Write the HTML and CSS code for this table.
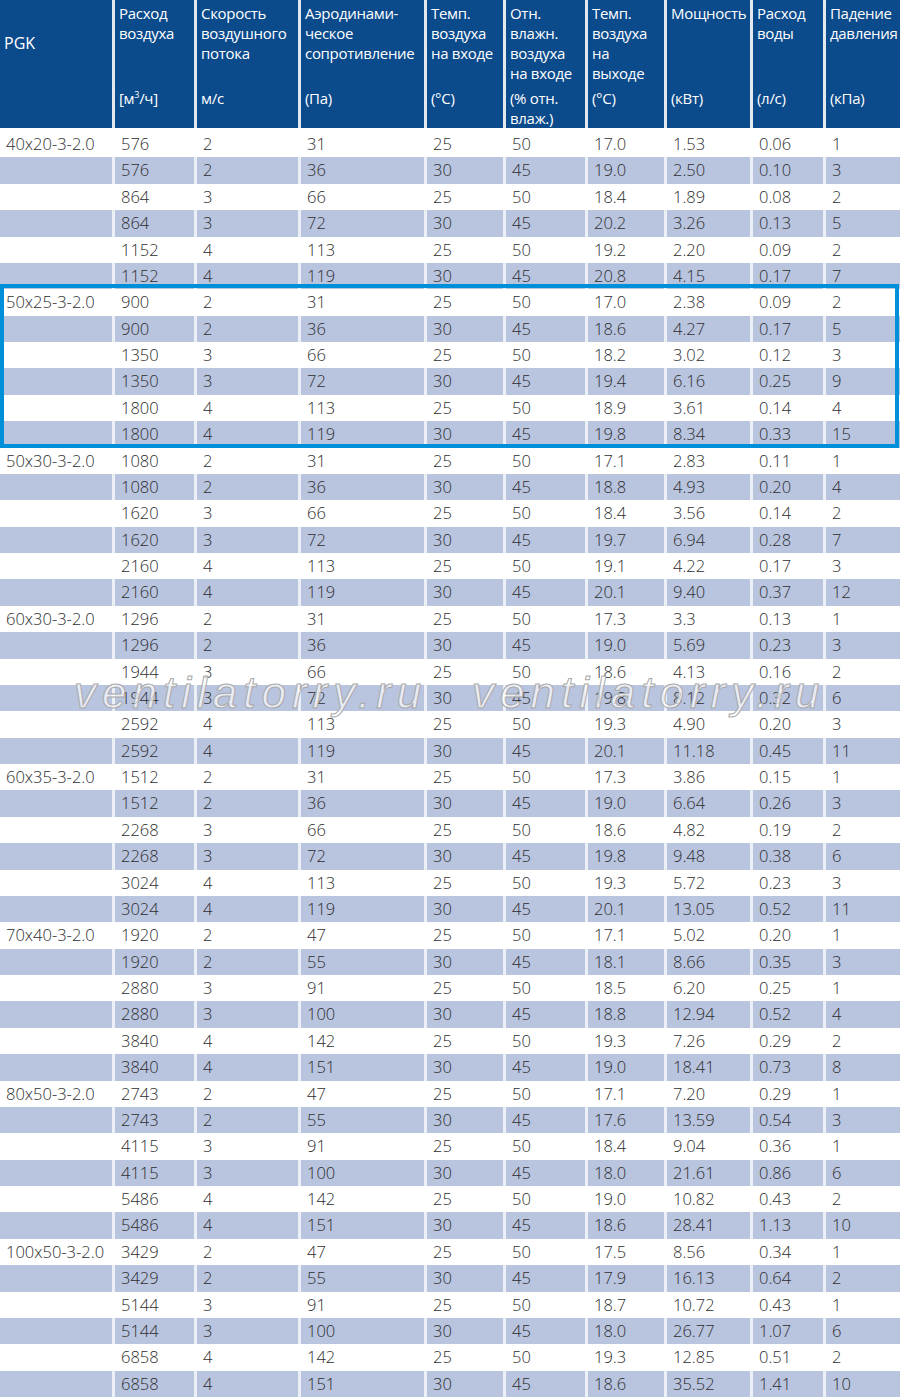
FILE: index.html
```html
<!DOCTYPE html>
<html lang="ru">
<head>
<meta charset="utf-8">
<title>PGK</title>
<link rel="stylesheet" href="styles.css">
</head>
<body>
<div class="sheet">
  <div class="head">
    <div class="h pgk">PGK</div>
    <div class="h"><div class="t">Расход<br>воздуха</div><div class="u">[м<sup>3</sup>/ч]</div></div>
    <div class="h"><div class="t">Скорость<br>воздушного<br>потока</div><div class="u">м/с</div></div>
    <div class="h"><div class="t">Аэродинами-<br>ческое<br>сопротивление</div><div class="u">(Па)</div></div>
    <div class="h"><div class="t">Темп.<br>воздуха<br>на входе</div><div class="u">(°C)</div></div>
    <div class="h"><div class="t">Отн.<br>влажн.<br>воздуха<br>на входе</div><div class="u">(% отн.<br>влаж.)</div></div>
    <div class="h"><div class="t">Темп.<br>воздуха<br>на<br>выходе</div><div class="u">(°C)</div></div>
    <div class="h"><div class="t">Мощность</div><div class="u">(кВт)</div></div>
    <div class="h"><div class="t">Расход<br>воды</div><div class="u">(л/с)</div></div>
    <div class="h"><div class="t">Падение<br>давления</div><div class="u">(кПа)</div></div>
  </div>

  <div class="grp">
    <div class="row"><span>40x20-3-2.0</span><span>576</span><span>2</span><span>31</span><span>25</span><span>50</span><span>17.0</span><span>1.53</span><span>0.06</span><span>1</span></div>
    <div class="row alt"><span></span><span>576</span><span>2</span><span>36</span><span>30</span><span>45</span><span>19.0</span><span>2.50</span><span>0.10</span><span>3</span></div>
    <div class="row"><span></span><span>864</span><span>3</span><span>66</span><span>25</span><span>50</span><span>18.4</span><span>1.89</span><span>0.08</span><span>2</span></div>
    <div class="row alt"><span></span><span>864</span><span>3</span><span>72</span><span>30</span><span>45</span><span>20.2</span><span>3.26</span><span>0.13</span><span>5</span></div>
    <div class="row"><span></span><span>1152</span><span>4</span><span>113</span><span>25</span><span>50</span><span>19.2</span><span>2.20</span><span>0.09</span><span>2</span></div>
    <div class="row alt"><span></span><span>1152</span><span>4</span><span>119</span><span>30</span><span>45</span><span>20.8</span><span>4.15</span><span>0.17</span><span>7</span></div>
  </div>

  <div class="grp hl">
    <div class="row"><span>50x25-3-2.0</span><span>900</span><span>2</span><span>31</span><span>25</span><span>50</span><span>17.0</span><span>2.38</span><span>0.09</span><span>2</span></div>
    <div class="row alt"><span></span><span>900</span><span>2</span><span>36</span><span>30</span><span>45</span><span>18.6</span><span>4.27</span><span>0.17</span><span>5</span></div>
    <div class="row"><span></span><span>1350</span><span>3</span><span>66</span><span>25</span><span>50</span><span>18.2</span><span>3.02</span><span>0.12</span><span>3</span></div>
    <div class="row alt"><span></span><span>1350</span><span>3</span><span>72</span><span>30</span><span>45</span><span>19.4</span><span>6.16</span><span>0.25</span><span>9</span></div>
    <div class="row"><span></span><span>1800</span><span>4</span><span>113</span><span>25</span><span>50</span><span>18.9</span><span>3.61</span><span>0.14</span><span>4</span></div>
    <div class="row alt"><span></span><span>1800</span><span>4</span><span>119</span><span>30</span><span>45</span><span>19.8</span><span>8.34</span><span>0.33</span><span>15</span></div>
  </div>

  <div class="grp">
    <div class="row"><span>50x30-3-2.0</span><span>1080</span><span>2</span><span>31</span><span>25</span><span>50</span><span>17.1</span><span>2.83</span><span>0.11</span><span>1</span></div>
    <div class="row alt"><span></span><span>1080</span><span>2</span><span>36</span><span>30</span><span>45</span><span>18.8</span><span>4.93</span><span>0.20</span><span>4</span></div>
    <div class="row"><span></span><span>1620</span><span>3</span><span>66</span><span>25</span><span>50</span><span>18.4</span><span>3.56</span><span>0.14</span><span>2</span></div>
    <div class="row alt"><span></span><span>1620</span><span>3</span><span>72</span><span>30</span><span>45</span><span>19.7</span><span>6.94</span><span>0.28</span><span>7</span></div>
    <div class="row"><span></span><span>2160</span><span>4</span><span>113</span><span>25</span><span>50</span><span>19.1</span><span>4.22</span><span>0.17</span><span>3</span></div>
    <div class="row alt"><span></span><span>2160</span><span>4</span><span>119</span><span>30</span><span>45</span><span>20.1</span><span>9.40</span><span>0.37</span><span>12</span></div>
  </div>

  <div class="grp">
    <div class="row"><span>60x30-3-2.0</span><span>1296</span><span>2</span><span>31</span><span>25</span><span>50</span><span>17.3</span><span>3.3</span><span>0.13</span><span>1</span></div>
    <div class="row alt"><span></span><span>1296</span><span>2</span><span>36</span><span>30</span><span>45</span><span>19.0</span><span>5.69</span><span>0.23</span><span>3</span></div>
    <div class="row"><span></span><span>1944</span><span>3</span><span>66</span><span>25</span><span>50</span><span>18.6</span><span>4.13</span><span>0.16</span><span>2</span></div>
    <div class="row alt"><span></span><span>1944</span><span>3</span><span>72</span><span>30</span><span>45</span><span>19.8</span><span>8.12</span><span>0.32</span><span>6</span></div>
    <div class="row"><span></span><span>2592</span><span>4</span><span>113</span><span>25</span><span>50</span><span>19.3</span><span>4.90</span><span>0.20</span><span>3</span></div>
    <div class="row alt"><span></span><span>2592</span><span>4</span><span>119</span><span>30</span><span>45</span><span>20.1</span><span>11.18</span><span>0.45</span><span>11</span></div>
  </div>

  <div class="grp">
    <div class="row"><span>60x35-3-2.0</span><span>1512</span><span>2</span><span>31</span><span>25</span><span>50</span><span>17.3</span><span>3.86</span><span>0.15</span><span>1</span></div>
    <div class="row alt"><span></span><span>1512</span><span>2</span><span>36</span><span>30</span><span>45</span><span>19.0</span><span>6.64</span><span>0.26</span><span>3</span></div>
    <div class="row"><span></span><span>2268</span><span>3</span><span>66</span><span>25</span><span>50</span><span>18.6</span><span>4.82</span><span>0.19</span><span>2</span></div>
    <div class="row alt"><span></span><span>2268</span><span>3</span><span>72</span><span>30</span><span>45</span><span>19.8</span><span>9.48</span><span>0.38</span><span>6</span></div>
    <div class="row"><span></span><span>3024</span><span>4</span><span>113</span><span>25</span><span>50</span><span>19.3</span><span>5.72</span><span>0.23</span><span>3</span></div>
    <div class="row alt"><span></span><span>3024</span><span>4</span><span>119</span><span>30</span><span>45</span><span>20.1</span><span>13.05</span><span>0.52</span><span>11</span></div>
  </div>

  <div class="grp">
    <div class="row"><span>70x40-3-2.0</span><span>1920</span><span>2</span><span>47</span><span>25</span><span>50</span><span>17.1</span><span>5.02</span><span>0.20</span><span>1</span></div>
    <div class="row alt"><span></span><span>1920</span><span>2</span><span>55</span><span>30</span><span>45</span><span>18.1</span><span>8.66</span><span>0.35</span><span>3</span></div>
    <div class="row"><span></span><span>2880</span><span>3</span><span>91</span><span>25</span><span>50</span><span>18.5</span><span>6.20</span><span>0.25</span><span>1</span></div>
    <div class="row alt"><span></span><span>2880</span><span>3</span><span>100</span><span>30</span><span>45</span><span>18.8</span><span>12.94</span><span>0.52</span><span>4</span></div>
    <div class="row"><span></span><span>3840</span><span>4</span><span>142</span><span>25</span><span>50</span><span>19.3</span><span>7.26</span><span>0.29</span><span>2</span></div>
    <div class="row alt"><span></span><span>3840</span><span>4</span><span>151</span><span>30</span><span>45</span><span>19.0</span><span>18.41</span><span>0.73</span><span>8</span></div>
  </div>

  <div class="grp">
    <div class="row"><span>80x50-3-2.0</span><span>2743</span><span>2</span><span>47</span><span>25</span><span>50</span><span>17.1</span><span>7.20</span><span>0.29</span><span>1</span></div>
    <div class="row alt"><span></span><span>2743</span><span>2</span><span>55</span><span>30</span><span>45</span><span>17.6</span><span>13.59</span><span>0.54</span><span>3</span></div>
    <div class="row"><span></span><span>4115</span><span>3</span><span>91</span><span>25</span><span>50</span><span>18.4</span><span>9.04</span><span>0.36</span><span>1</span></div>
    <div class="row alt"><span></span><span>4115</span><span>3</span><span>100</span><span>30</span><span>45</span><span>18.0</span><span>21.61</span><span>0.86</span><span>6</span></div>
    <div class="row"><span></span><span>5486</span><span>4</span><span>142</span><span>25</span><span>50</span><span>19.0</span><span>10.82</span><span>0.43</span><span>2</span></div>
    <div class="row alt"><span></span><span>5486</span><span>4</span><span>151</span><span>30</span><span>45</span><span>18.6</span><span>28.41</span><span>1.13</span><span>10</span></div>
  </div>

  <div class="grp">
    <div class="row"><span>100x50-3-2.0</span><span>3429</span><span>2</span><span>47</span><span>25</span><span>50</span><span>17.5</span><span>8.56</span><span>0.34</span><span>1</span></div>
    <div class="row alt"><span></span><span>3429</span><span>2</span><span>55</span><span>30</span><span>45</span><span>17.9</span><span>16.13</span><span>0.64</span><span>2</span></div>
    <div class="row"><span></span><span>5144</span><span>3</span><span>91</span><span>25</span><span>50</span><span>18.7</span><span>10.72</span><span>0.43</span><span>1</span></div>
    <div class="row alt"><span></span><span>5144</span><span>3</span><span>100</span><span>30</span><span>45</span><span>18.0</span><span>26.77</span><span>1.07</span><span>6</span></div>
    <div class="row"><span></span><span>6858</span><span>4</span><span>142</span><span>25</span><span>50</span><span>19.3</span><span>12.85</span><span>0.51</span><span>2</span></div>
    <div class="row alt"><span></span><span>6858</span><span>4</span><span>151</span><span>30</span><span>45</span><span>18.6</span><span>35.52</span><span>1.41</span><span>10</span></div>
  </div>

  <div class="wm wm1">ventilatorry.ru</div>
  <div class="wm wm2">ventilatorry.ru</div>
</div>
</body>
</html>
```

FILE: styles.css
```css
html, body {
  margin: 0;
  padding: 0;
  background: #ffffff;
}

body {
  width: 900px;
  overflow: hidden;
}

.sheet {
  position: relative;
  width: 900px;
  overflow: hidden;
  font-family: "Open Sans", "Noto Sans", "DejaVu Sans", sans-serif;
}

.head,
.row {
  display: grid;
  grid-template-columns: 112px 79px 101px 123px 76px 79px 76px 83px 70px 1fr;
  column-gap: 3px;
}

.head {
  height: 128px;
  margin-bottom: 3px;
  background: #e3e7ee;
}

.h {
  background: #0b4a8b;
  color: #ffffff;
  font-size: 15px;
  line-height: 20px;
  letter-spacing: -0.3px;
  padding: 3px 0 0 4px;
  white-space: nowrap;
  overflow: visible;
}

.h .t {
  height: 85px;
}

.h sup {
  font-size: 9px;
  line-height: 0;
  vertical-align: 6px;
}

.h.pgk {
  padding-top: 33px;
  font-size: 16px;
  letter-spacing: 0;
}

.row {
  height: 26.375px;
  line-height: 26.375px;
  font-size: 16.5px;
  font-weight: 300;
  color: #2e2e2e;
}

.row span {
  padding-left: 6px;
  white-space: nowrap;
}

.row.alt {
  background: #eceff5;
}

.row.alt span {
  background: #b9c4df;
}

.grp.hl {
  position: relative;
}

.grp.hl::after {
  content: "";
  position: absolute;
  left: 0;
  right: 1px;
  top: -5px;
  bottom: 0;
  border: 4.5px solid #0090da;
  pointer-events: none;
}

.wm {
  position: absolute;
  top: 673px;
  font-family: "Liberation Sans", Arial, sans-serif;
  font-style: italic;
  font-size: 44px;
  line-height: 40px;
  letter-spacing: 6px;
  color: rgba(255, 255, 255, 0.7);
  -webkit-text-stroke: 1px #a8a8a8;
  white-space: nowrap;
  pointer-events: none;
}

.wm1 {
  left: 74px;
}

.wm2 {
  left: 472px;
}
```
